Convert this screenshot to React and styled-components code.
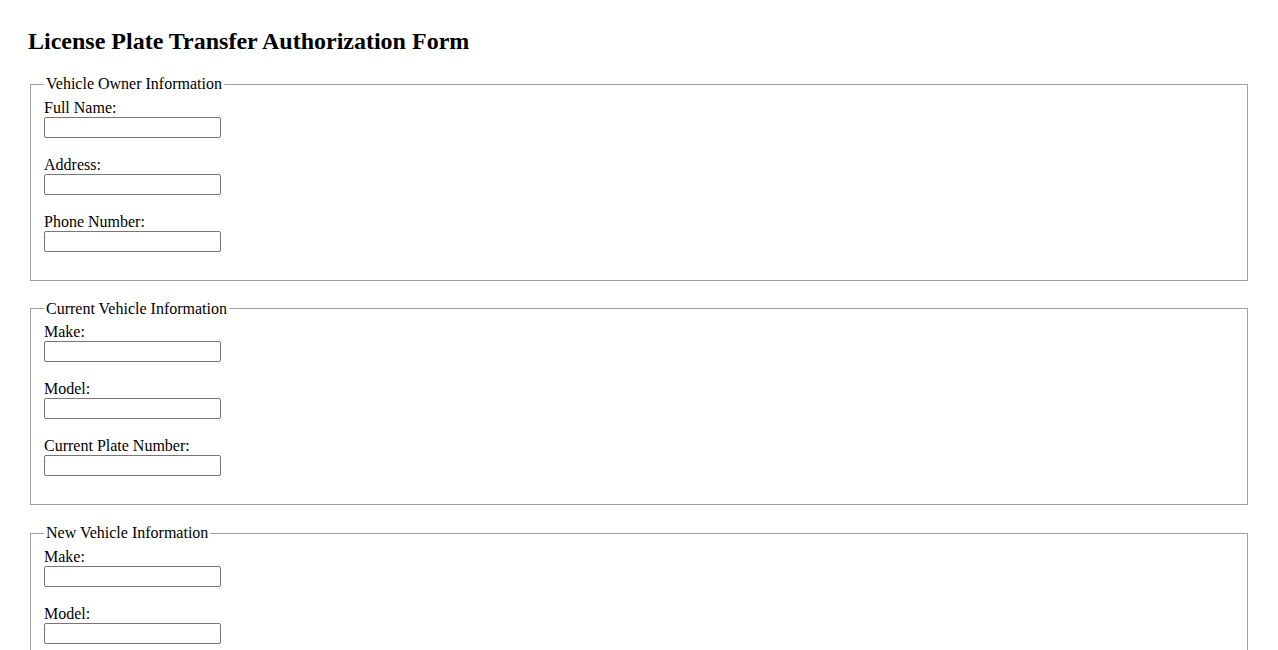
import styled, { createGlobalStyle } from "styled-components";

const GlobalStyle = createGlobalStyle`
  body {
    margin: 0;
    background: #ffffff;
    color: #000000;
    font-family: "Liberation Serif", "Times New Roman", serif;
  }
`;

const Page = styled.div`
  padding: 27px 28px;
`;

const Title = styled.h1`
  margin: 0 0 20px;
  font-size: 24px;
  line-height: 28px;
  font-weight: bold;
`;

const Section = styled.fieldset`
  margin: 0 2px 19px;
  padding: 5.6px 13px 10px;
  border: 1px solid #a0a0a0;
  min-width: 0;
`;

const Legend = styled.legend`
  padding: 0 2px;
  font-size: 16px;
  line-height: 18px;
`;

const Field = styled.div`
  margin-bottom: 18px;
`;

const Label = styled.label`
  display: block;
  font-size: 16px;
  line-height: 18px;
`;

const Input = styled.input`
  box-sizing: border-box;
  display: block;
  width: 177px;
  height: 21px;
  margin: 0;
  padding: 1px 2px;
  border: 1px solid #767676;
  border-radius: 2px;
  font-family: "Liberation Sans", Arial, sans-serif;
  font-size: 13.33px;
  background: #fff;
`;

const sections = [
  {
    title: "Vehicle Owner Information",
    fields: [
      { id: "ownerName", label: "Full Name:" },
      { id: "ownerAddress", label: "Address:" },
      { id: "ownerPhone", label: "Phone Number:" },
    ],
  },
  {
    title: "Current Vehicle Information",
    fields: [
      { id: "currentMake", label: "Make:" },
      { id: "currentModel", label: "Model:" },
      { id: "currentPlate", label: "Current Plate Number:" },
    ],
  },
  {
    title: "New Vehicle Information",
    fields: [
      { id: "newMake", label: "Make:" },
      { id: "newModel", label: "Model:" },
      { id: "newVin", label: "VIN:" },
    ],
  },
];

export default function App() {
  return (
    <>
      <GlobalStyle />
      <Page>
        <Title>License Plate Transfer Authorization Form</Title>
        <form onSubmit={(e) => e.preventDefault()}>
          {sections.map((s) => (
            <Section key={s.title}>
              <Legend>{s.title}</Legend>
              {s.fields.map((f) => (
                <Field key={f.id}>
                  <Label htmlFor={f.id}>{f.label}</Label>
                  <Input type="text" id={f.id} name={f.id} />
                </Field>
              ))}
            </Section>
          ))}
        </form>
      </Page>
    </>
  );
}
